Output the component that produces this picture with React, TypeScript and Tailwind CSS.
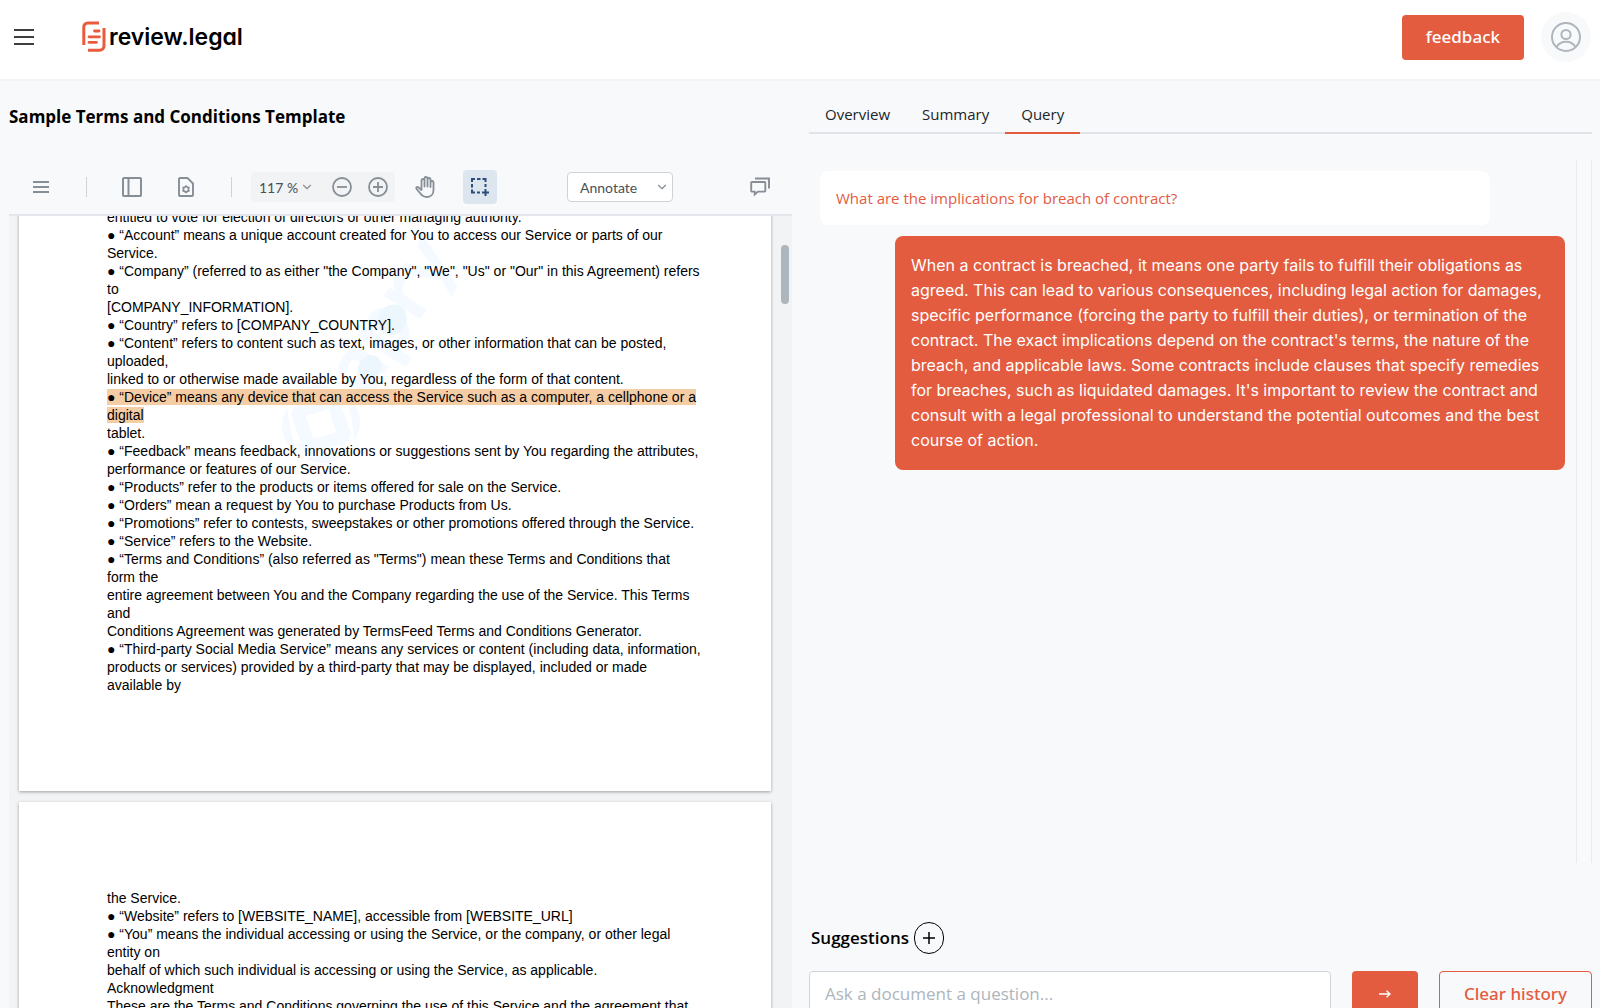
import { useState } from "react";
import { ChevronDown } from "lucide-react";

const definitions = [
  { text: "entitled to vote for election of directors or other managing authority." },
  { text: "● “Account” means a unique account created for You to access our Service or parts of our" },
  { text: "Service." },
  { text: "● “Company” (referred to as either \"the Company\", \"We\", \"Us\" or \"Our\" in this Agreement) refers" },
  { text: "to" },
  { text: "[COMPANY_INFORMATION]." },
  { text: "● “Country” refers to [COMPANY_COUNTRY]." },
  { text: "● “Content” refers to content such as text, images, or other information that can be posted," },
  { text: "uploaded," },
  { text: "linked to or otherwise made available by You, regardless of the form of that content." },
  { text: "● “Device” means any device that can access the Service such as a computer, a cellphone or a", marked: true },
  { text: "digital", marked: true },
  { text: "tablet." },
  { text: "● “Feedback” means feedback, innovations or suggestions sent by You regarding the attributes," },
  { text: "performance or features of our Service." },
  { text: "● “Products” refer to the products or items offered for sale on the Service." },
  { text: "● “Orders” mean a request by You to purchase Products from Us." },
  { text: "● “Promotions” refer to contests, sweepstakes or other promotions offered through the Service." },
  { text: "● “Service” refers to the Website." },
  { text: "● “Terms and Conditions” (also referred as \"Terms\") mean these Terms and Conditions that" },
  { text: "form the" },
  { text: "entire agreement between You and the Company regarding the use of the Service. This Terms" },
  { text: "and" },
  { text: "Conditions Agreement was generated by TermsFeed Terms and Conditions Generator." },
  { text: "● “Third-party Social Media Service” means any services or content (including data, information," },
  { text: "products or services) provided by a third-party that may be displayed, included or made" },
  { text: "available by" },
];

const acknowledgment = [
  { text: "the Service." },
  { text: "● “Website” refers to [WEBSITE_NAME], accessible from [WEBSITE_URL]" },
  { text: "● “You” means the individual accessing or using the Service, or the company, or other legal" },
  { text: "entity on" },
  { text: "behalf of which such individual is accessing or using the Service, as applicable." },
  { text: "Acknowledgment" },
  { text: "These are the Terms and Conditions governing the use of this Service and the agreement that" },
];

const tabs = ["Overview", "Summary", "Query"];

type Line = { text: string; marked?: boolean };

function Lines({ lines }: { lines: Line[] }) {
  return (
    <div className="relative whitespace-nowrap font-['Liberation_Sans',sans-serif] text-[14px] leading-[18px] text-black">
      {lines.map((line) => (
        <p key={line.text}>
          {line.marked ? <mark className="bg-[#f5cda5] text-black">{line.text}</mark> : line.text}
        </p>
      ))}
    </div>
  );
}

function Watermark() {
  return (
    <svg className="absolute left-[230px] top-0 h-[280px] w-[260px] overflow-visible" viewBox="0 0 260 280" aria-hidden="true">
      <g transform="translate(72 216) rotate(-57)" fill="#f4faff">
        <path d="M-37 -5C-37 -24 -22 -37 -5 -37L-22 -22ZM5 -37C24 -37 37 -22 37 -5L22 -22ZM37 5C37 24 22 37 5 37L22 22ZM-5 37C-24 37 -37 22 -37 5L-22 22Z" />
        <path d="M-33 2L-8 -31L10 -31L-24 10ZM-2 -33L31 -8L31 10L-10 -24ZM33 -2L8 31L-10 31L24 -10ZM2 33L-31 8L-31 -10L10 24Z" />
        <text x="46" y="26" fontSize="84" fontWeight="900" fontFamily="Lato, sans-serif">
          apry
        </text>
        <ellipse cx="74" cy="10" rx="13" ry="11" fill="#ebf7fc" />
        <ellipse cx="126" cy="3" rx="16" ry="14" fill="#ebf7fc" />
      </g>
    </svg>
  );
}

function LogoMark() {
  return (
    <svg width="24" height="32" viewBox="0 0 24 32" fill="none" stroke="#ea5b3d" strokeWidth="3" aria-hidden="true">
      <path d="M1.800 24V6a4 4 0 0 1 4-4H17" />
      <path d="M22 7v18a4.300 4.300 0 0 1-4.300 4.300H6" />
      <path d="M12.500 10h4.500M7 15.800h10.500M7 21.300h7.500" strokeLinecap="round" strokeWidth="2.800" />
    </svg>
  );
}

function PanelIcon() {
  return (
    <svg width="20" height="20" viewBox="0 0 20 20" fill="none" stroke="currentColor" strokeWidth="2" aria-hidden="true">
      <rect x="1" y="1" width="18" height="18" rx="1" />
      <path d="M6.500 1v18" />
    </svg>
  );
}

function PageSettingsIcon() {
  return (
    <svg width="16" height="20" viewBox="0 0 16 20" fill="none" stroke="currentColor" strokeWidth="1.900" aria-hidden="true">
      <path d="M2 1h7.500L15 6.500V18a1 1 0 0 1-1 1H2a1 1 0 0 1-1-1V2a1 1 0 0 1 1-1Z" />
      <circle cx="8" cy="12.300" r="2.600" strokeWidth="1.600" />
      <path d="M8 8.300v1.500M8 14.800v1.500M4.500 10.300l1.300.8M10.200 13.500l1.300.8M4.500 14.300l1.300-.8M10.200 11.100l1.300-.8" strokeWidth="1.600" />
    </svg>
  );
}

function CircleIcon({ plus }: { plus?: boolean }) {
  return (
    <svg width="20" height="20" viewBox="0 0 20 20" fill="none" stroke="currentColor" strokeWidth="1.800" aria-hidden="true">
      <circle cx="10" cy="10" r="9" />
      <path d={plus ? "M5 10h10M10 5v10" : "M5 10h10"} />
    </svg>
  );
}

function HandIcon() {
  return (
    <svg width="20" height="22" viewBox="0 0 20 22" fill="none" stroke="currentColor" strokeWidth="1.800" strokeLinecap="round" strokeLinejoin="round" aria-hidden="true">
      <path d="M6.500 12.500V4.500a1.500 1.500 0 0 1 3 0v6V2.500a1.500 1.500 0 0 1 3 0v8V3.500a1.500 1.500 0 0 1 3 0v7.500V6.500a1.500 1.500 0 0 1 3 0v7.500c0 4-2.500 7-6.500 7-3.500 0-5.300-1.500-7-4L1.500 12.800c-.7-1.200.6-2.300 1.800-1.600L6.500 14Z" />
    </svg>
  );
}

function MarqueeIcon() {
  return (
    <svg width="20" height="20" viewBox="0 0 20 20" fill="none" stroke="currentColor" strokeWidth="2" aria-hidden="true">
      <path d="M2 5V2h3M7 2h3.500M12.500 2h3v3M2 7v3.500M2 12.500v3h3M7 15.500h3M15.500 7v3" />
      <path d="M15.500 12v7M12 15.500h7" />
    </svg>
  );
}

function CommentsIcon() {
  return (
    <svg width="20" height="20" viewBox="0 0 20 20" fill="none" stroke="currentColor" strokeWidth="1.900" aria-hidden="true">
      <path d="M5 1.500h14v10" />
      <path d="M2 5h12.500a.8.800 0 0 1 .8.800v8a.8.800 0 0 1-.8.800H8L4.700 17.500v-2.900H2a.8.800 0 0 1-.8-.8v-8A.8.800 0 0 1 2 5Z" />
    </svg>
  );
}

function Header() {
  return (
    <header className="flex items-center border-b-2 border-[#f1f3f4] bg-white pt-3 pr-[9px] pb-[17px] pl-[14px]">
      <button type="button" aria-label="Menu" className="flex h-5 w-5 items-center justify-center">
        <svg width="20" height="16" viewBox="0 0 20 16" stroke="black" strokeWidth="1.600" aria-hidden="true">
          <path d="M0 1h20M0 8h20M0 15h20" />
        </svg>
      </button>
      <a href="#" className="ml-12 flex items-center gap-[3px]">
        <LogoMark />
        <span className="font-['Inter',sans-serif] text-[23px] leading-8 font-semibold text-black [font-feature-settings:'cv11','ss03']">
          review.legal
        </span>
      </a>
      <button type="button" className="ml-auto h-[45px] rounded bg-[#e35c3f] px-6 text-[17px] font-medium text-white">
        feedback
      </button>
      <button
        type="button"
        aria-label="Account"
        className="ml-[17px] flex h-[50px] w-[50px] items-center justify-center rounded-full bg-[#f8f9fb] text-[#adb5bd]"
      >
        <svg width="30" height="30" viewBox="0 0 30 30" fill="none" stroke="currentColor" strokeWidth="2" aria-hidden="true">
          <circle cx="15" cy="15" r="14" />
          <circle cx="15" cy="12.500" r="4.600" />
          <path d="M5.500 25C7.500 21.500 11 19.800 15 19.800S22.500 21.500 24.500 25" />
        </svg>
      </button>
    </header>
  );
}

function Toolbar() {
  return (
    <div className="mt-[29px] flex h-14 items-center border-b-2 border-[#e3e7eb] px-4 font-['Lato',sans-serif] text-[#868e96]">
      <button type="button" aria-label="Viewer menu" className="flex h-8 w-8 items-center justify-center">
        <svg width="16" height="12" viewBox="0 0 16 12" stroke="currentColor" strokeWidth="1.800" aria-hidden="true">
          <path d="M0 1h16M0 6h16M0 11h16" />
        </svg>
      </button>
      <span className="mx-[29px] h-5 w-px bg-[#ced4da]" />
      <button type="button" aria-label="Toggle panel" className="flex h-8 w-8 items-center justify-center">
        <PanelIcon />
      </button>
      <button type="button" aria-label="View controls" className="ml-[22px] flex h-8 w-8 items-center justify-center">
        <PageSettingsIcon />
      </button>
      <span className="ml-[29px] h-5 w-px bg-[#ced4da]" />
      <div className="ml-[19px] flex h-[30px] w-36 items-center rounded bg-[#f1f3f5] pr-[7px] pl-2">
        <button type="button" className="flex items-center gap-0.5 text-[14px] text-[#485056]">
          <span>117 %</span>
          <ChevronDown className="h-[14px] w-[14px] text-[#868e96]" />
        </button>
        <button type="button" aria-label="Zoom out" className="ml-auto">
          <CircleIcon />
        </button>
        <button type="button" aria-label="Zoom in" className="ml-4">
          <CircleIcon plus />
        </button>
      </div>
      <button type="button" aria-label="Pan" className="ml-[14px] flex h-8 w-8 items-center justify-center">
        <HandIcon />
      </button>
      <button
        type="button"
        aria-label="Select"
        className="ml-[22px] flex h-[34px] w-[34px] items-center justify-center rounded bg-[#dde6ee] text-[#2a4e7c]"
      >
        <MarqueeIcon />
      </button>
      <div className="relative ml-[70px]">
        <select
          aria-label="Tool group"
          className="block h-[30px] w-[106px] appearance-none rounded border border-[#ced4da] bg-white pl-3 text-[14px] text-[#485056]"
        >
          <option>Annotate</option>
        </select>
        <ChevronDown className="pointer-events-none absolute top-2 right-1 h-[14px] w-[14px]" />
      </div>
      <button type="button" aria-label="Comments" className="ml-auto flex h-8 w-8 items-center justify-center">
        <CommentsIcon />
      </button>
    </div>
  );
}

function DocumentPanel() {
  return (
    <section className="flex min-h-0 flex-col pt-[22px]">
      <h1 className="font-['Open_Sans',sans-serif] text-[17px] leading-7 font-bold text-black">
        Sample Terms and Conditions Template
      </h1>
      <Toolbar />
      <div className="relative min-h-0 flex-1 overflow-hidden bg-[#f1f3f5] pr-[21px] pl-[10px]">
        <div className="relative -mt-2 bg-white px-[88px] pb-[97px] shadow-[0_1px_3px_rgba(0,0,0,0.35)]">
          <Watermark />
          <Lines lines={definitions} />
        </div>
        <div className="mt-[11px] bg-white px-[88px] pt-[87px] pb-24 shadow-[0_1px_3px_rgba(0,0,0,0.35)]">
          <Lines lines={acknowledgment} />
        </div>
        <div className="absolute top-[29px] right-[3px] h-[59px] w-2 rounded-full bg-[#adb5bd]" />
      </div>
    </section>
  );
}

function QueryPanel() {
  const [active, setActive] = useState("Query");

  return (
    <section className="pt-[21px] font-['Open_Sans',sans-serif]">
      <div role="tablist" className="flex border-b-2 border-[#e1e4e8]">
        {tabs.map((tab) => (
          <button
            key={tab}
            type="button"
            role="tab"
            aria-selected={tab === active}
            onClick={() => setActive(tab)}
            className={
              tab === active
                ? "-mb-0.5 border-b-2 border-[#e35c3f] px-4 pb-[6px] text-[15px] leading-6 text-[#212529]"
                : "-mb-0.5 border-b-2 border-transparent px-4 pb-[6px] text-[15px] leading-6 text-[#212529]"
            }
          >
            {tab}
          </button>
        ))}
      </div>

      <div className="mt-[26px] flex h-[calc(100vh-305px)]">
        <div className="flex min-w-0 flex-1 flex-col gap-[11px] p-[11px]">
          <div className="mr-[75px] rounded-lg bg-white px-4 py-[15px] text-[15px] leading-6 text-[#e35c3f]">
            What are the implications for breach of contract?
          </div>
          <div className="ml-[75px] rounded-lg bg-[#e35c3f] px-4 py-[17px] font-['Inter',sans-serif] text-[16px] leading-[25px] text-white">
            When a contract is breached, it means one party fails to fulfill their obligations as agreed. This can lead
            to various consequences, including legal action for damages, specific performance (forcing the party to
            fulfill their duties), or termination of the contract. The exact implications depend on the contract's
            terms, the nature of the breach, and applicable laws. Some contracts include clauses that specify remedies
            for breaches, such as liquidated damages. It's important to review the contract and consult with a legal
            professional to understand the potential outcomes and the best course of action.
          </div>
        </div>
        <div className="w-4 border-x border-[#e9ebed] bg-[#fafafa]" />
      </div>

      <div className="mt-[59px] flex items-center gap-[5px] pl-0.5">
        <h2 className="text-[17px] leading-8 font-semibold text-black">Suggestions</h2>
        <button
          type="button"
          aria-label="Add suggestion"
          className="flex h-8 w-[30px] items-center justify-center rounded-full border border-black"
        >
          <svg width="12" height="12" viewBox="0 0 12 12" stroke="black" strokeWidth="1.500" aria-hidden="true">
            <path d="M0 6h12M6 0v12" />
          </svg>
        </button>
      </div>

      <form className="mt-[17px] flex" onSubmit={(e) => e.preventDefault()}>
        <input
          type="text"
          aria-label="Ask a document a question"
          placeholder="Ask a document a question..."
          className="h-[45px] min-w-0 flex-1 rounded border border-[#ced4da] bg-white px-[15px] text-[17px] placeholder:text-[#adb5bd]"
        />
        <button type="submit" className="ml-[21px] h-[45px] w-[66px] rounded bg-[#e35c3f] text-white">
          <svg className="mx-auto" width="12" height="8" viewBox="0 0 12 8" fill="none" stroke="currentColor" strokeWidth="1.300" aria-label="Send">
            <path d="M0 4h11M7.500.8 11 4 7.500 7.200" />
          </svg>
        </button>
        <button
          type="button"
          className="ml-[21px] h-[45px] w-[153px] rounded border border-[#e35c3f] font-['Noto_Sans',sans-serif] text-[17px] font-medium text-[#e35c3f]"
        >
          Clear history
        </button>
      </form>
    </section>
  );
}

export default function App() {
  return (
    <div className="flex h-screen flex-col overflow-hidden bg-[#f8f9fb] font-['Noto_Sans',sans-serif]">
      <Header />
      <main className="grid min-h-0 flex-1 grid-cols-2 gap-[17px] pr-2 pl-[9px]">
        <DocumentPanel />
        <QueryPanel />
      </main>
    </div>
  );
}
